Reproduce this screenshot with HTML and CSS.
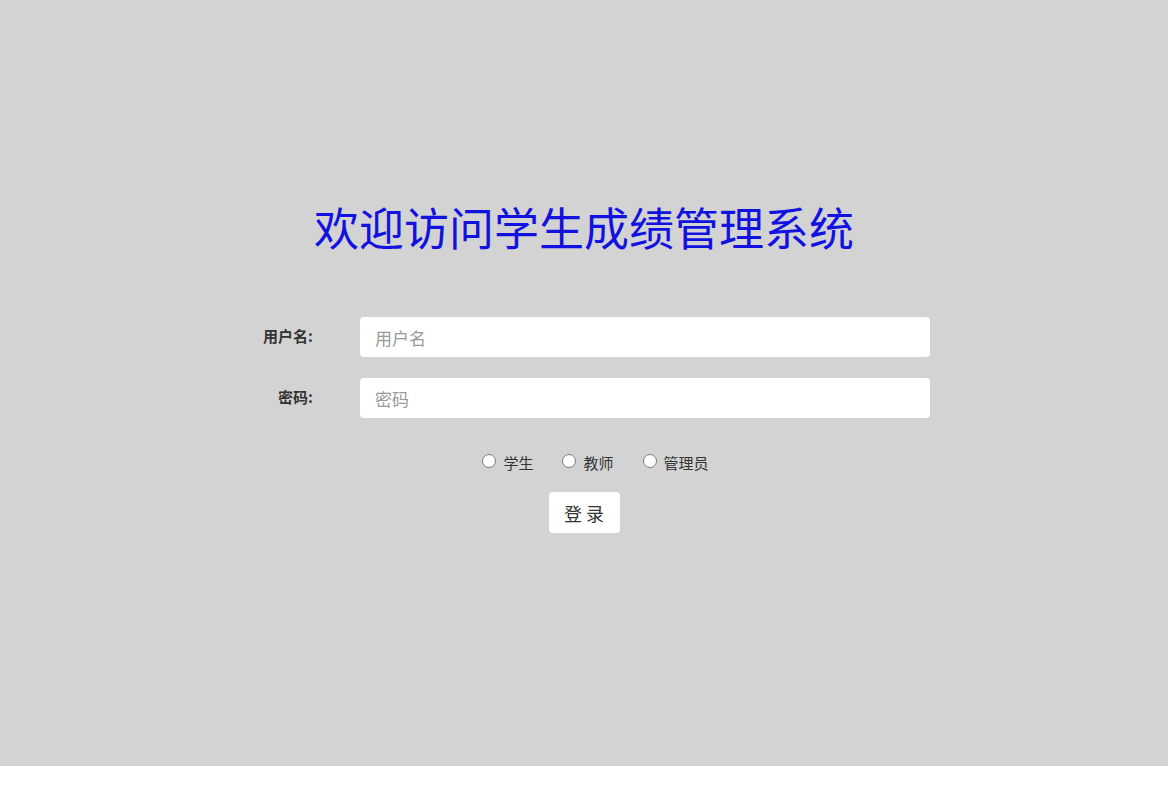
FILE: index.html
```html
<!DOCTYPE html>
<html lang="zh-CN">
<head>
<meta charset="utf-8">
<title>学生成绩管理系统</title>
<link rel="stylesheet" href="styles.css">
</head>
<body>
<div class="page">
  <h1 class="title">欢迎访问学生成绩管理系统</h1>
  <form class="login">
    <div class="rows">
      <label class="lbl" for="u">用户名:</label>
      <input class="field" id="u" type="text" placeholder="用户名">
      <label class="lbl" for="p">密码:</label>
      <input class="field" id="p" type="password" placeholder="密码">
    </div>
    <div class="roles">
      <label class="role"><input type="radio" name="role" class="radio">学生</label>
      <label class="role"><input type="radio" name="role" class="radio">教师</label>
      <label class="role"><input type="radio" name="role" class="radio">管理员</label>
    </div>
    <button type="button" class="btn">登 录</button>
  </form>
</div>
</body>
</html>
```
FILE: styles.css
```css
html, body {
  margin: 0;
  padding: 0;
  background: #ffffff;
  font-family: "Noto Sans CJK SC", "Noto Sans", sans-serif;
}
.page {
  height: 766px;
  background: #d3d3d3;
  display: flex;
  flex-direction: column;
  align-items: center;
  padding-top: 197px;
  box-sizing: border-box;
}
.title {
  margin: 0;
  font-size: 45px;
  font-weight: normal;
  line-height: 60px;
  color: #1212e0;
  letter-spacing: 0;
}
.login {
  margin-top: 60px;
  display: flex;
  flex-direction: column;
  align-items: center;
}
.rows {
  display: grid;
  grid-template-columns: 75px 570px;
  column-gap: 47px;
  row-gap: 21px;
  align-items: center;
}
.lbl {
  text-align: right;
  font-size: 15px;
  font-weight: bold;
  color: #333333;
  white-space: nowrap;
  position: relative;
  top: -2px;
}
.field {
  box-sizing: border-box;
  width: 570px;
  height: 40px;
  border: none;
  border-radius: 4px;
  background: #ffffff;
  padding: 0 15px;
  font-size: 17px;
  font-family: inherit;
  color: #333;
  outline: none;
}
.field::placeholder {
  color: #9a9a9a;
}
.roles {
  margin-top: 34px;
  display: flex;
  justify-content: center;
  gap: 29px;
  padding-left: 23px;
  font-size: 15px;
  color: #333333;
}
.role {
  display: flex;
  align-items: center;
  gap: 7px;
}
.radio {
  margin: 0;
  width: 14px;
  height: 14px;
  position: relative;
  top: -2px;
}
.btn {
  margin-top: 19px;
  width: 71px;
  height: 41px;
  border: none;
  border-radius: 4px;
  background: #ffffff;
  font-size: 18px;
  font-family: inherit;
  color: #333333;
  padding: 0;
}
```
